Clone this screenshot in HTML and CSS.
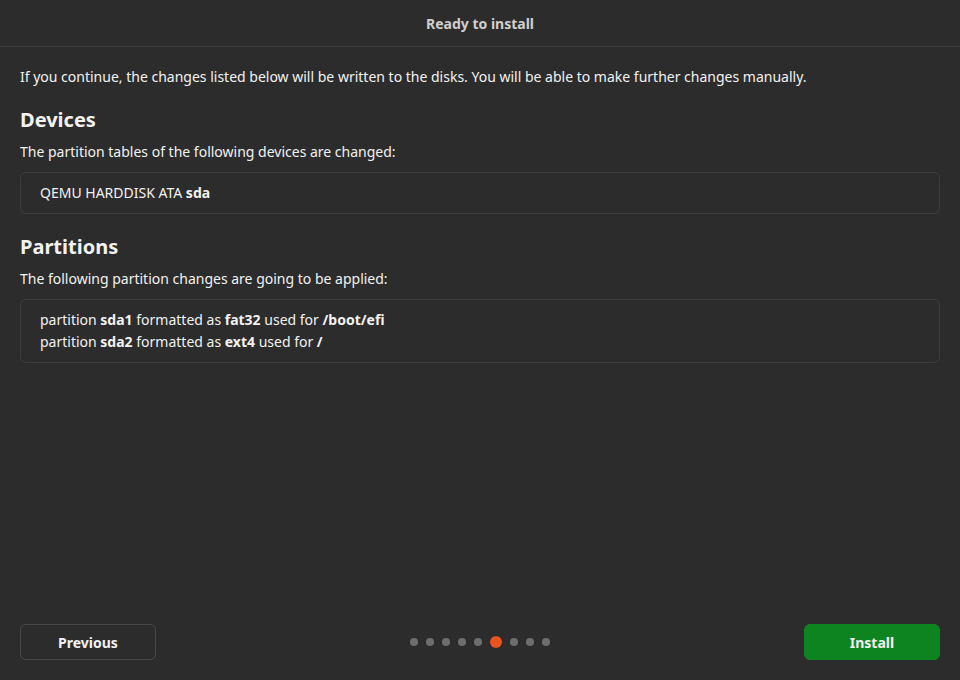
FILE: index.html
```html
<!DOCTYPE html>
<html>
<head>
<meta charset="utf-8">
<link rel="stylesheet" href="styles.css">
</head>
<body>
<div class="app">
  <header class="titlebar">Ready to install</header>
  <main class="content">
    <p class="intro">If you continue, the changes listed below will be written to the disks. You will be able to make further changes manually.</p>
    <h2 class="heading">Devices</h2>
    <p class="sub">The partition tables of the following devices are changed:</p>
    <div class="box">
      <div class="line">QEMU HARDDISK ATA <b>sda</b></div>
    </div>
    <h2 class="heading">Partitions</h2>
    <p class="sub">The following partition changes are going to be applied:</p>
    <div class="box">
      <div class="line">partition <b>sda1</b> formatted as <b>fat32</b> used for <b>/boot/efi</b></div>
      <div class="line">partition <b>sda2</b> formatted as <b>ext4</b> used for <b>/</b></div>
    </div>
  </main>
  <footer class="footer">
    <button class="btn btn-secondary">Previous</button>
    <div class="dots">
      <span class="dot"></span><span class="dot"></span><span class="dot"></span><span class="dot"></span><span class="dot"></span><span class="dot active"></span><span class="dot"></span><span class="dot"></span><span class="dot"></span>
    </div>
    <button class="btn btn-primary">Install</button>
  </footer>
</div>
</body>
</html>
```
FILE: styles.css
```css
* { box-sizing: border-box; }
html, body {
  margin: 0;
  padding: 0;
  background: #2c2c2c;
}
body {
  font-family: "Noto Sans", "Open Sans", sans-serif;
  color: #f2f2f2;
  font-size: 14px;
}
.app {
  width: 960px;
  height: 680px;
  display: flex;
  flex-direction: column;
}
.titlebar {
  height: 47px;
  border-bottom: 1px solid #3a3a3a;
  display: flex;
  align-items: center;
  justify-content: center;
  font-weight: bold;
  font-size: 14px;
  color: #cfcfcf;
}
.content {
  flex: 1;
  padding: 20px 20px 0;
}
.intro {
  margin: 0;
  line-height: 20px;
}
.heading {
  margin: 20px 0 0;
  font-size: 20px;
  line-height: 26px;
  font-weight: bold;
}
.sub {
  margin: 9px 0 0;
  line-height: 20px;
}
.box {
  margin-top: 10px;
  border: 1px solid #3d3d3d;
  border-radius: 6px;
  padding: 9px 19px;
}
.line {
  line-height: 22px;
}
.line b { font-weight: bold; }
.footer {
  height: 56px;
  padding: 0 20px 20px;
  display: flex;
  align-items: center;
  justify-content: space-between;
}
.btn {
  width: 136px;
  height: 36px;
  border-radius: 6px;
  font-family: inherit;
  font-size: 14px;
  font-weight: bold;
  color: #f2f2f2;
  cursor: pointer;
}
.btn-secondary {
  background: #2c2c2c;
  border: 1px solid #484848;
}
.btn-primary {
  background: #0e8420;
  border: 1px solid #0e8420;
}
.dots {
  display: flex;
  align-items: center;
  gap: 8px;
}
.dot {
  width: 8px;
  height: 8px;
  border-radius: 50%;
  background: #6e6e6e;
}
.dot.active {
  width: 12px;
  height: 12px;
  background: #e95420;
}
```
